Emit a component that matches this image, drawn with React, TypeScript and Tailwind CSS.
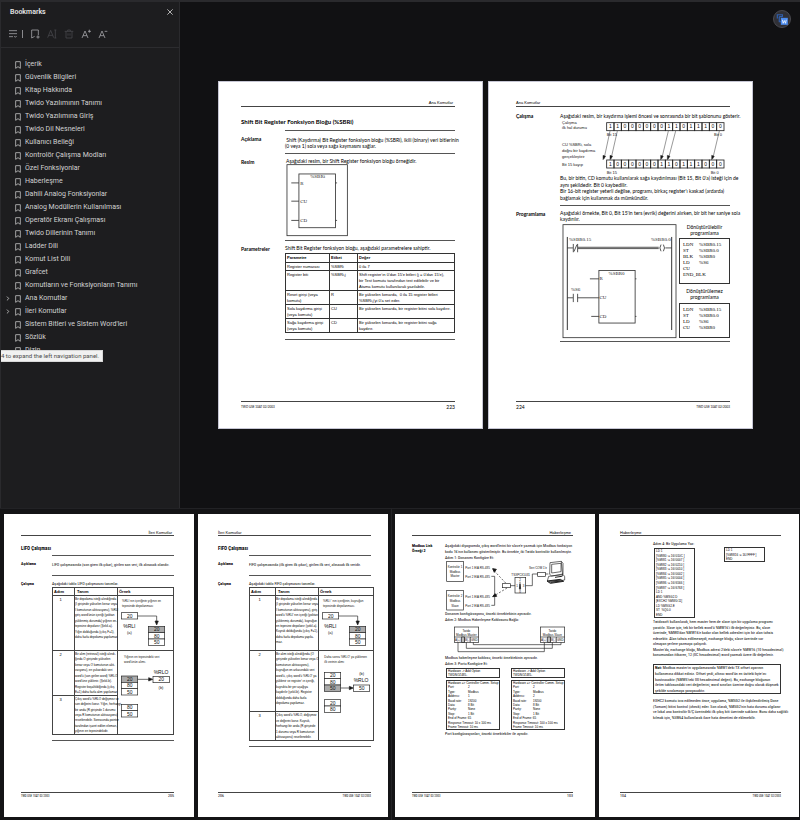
import { ReactNode } from "react";

const bookmarks = [
  "İçerik",
  "Güvenlik Bilgileri",
  "Kitap Hakkında",
  "Twido Yazılımının Tanımı",
  "Twido Yazılımına Giriş",
  "Twido Dil Nesneleri",
  "Kullanıcı Belleği",
  "Kontrolör Çalışma Modları",
  "Özel Fonksiyonlar",
  "Haberleşme",
  "Dahili Analog Fonksiyonlar",
  "Analog Modüllerin Kullanılması",
  "Operatör Ekranı Çalışması",
  "Twido Dillerinin Tanımı",
  "Ladder Dili",
  "Komut List Dili",
  "Grafcet",
  "Komutların ve Fonksiyonların Tanımı",
  "Ana Komutlar",
  "İleri Komutlar",
  "Sistem Bitleri ve Sistem Word'leri",
  "Sözlük",
  "Dizin",
];

const expandable = ["Ana Komutlar", "İleri Komutlar"];

const parameters = [
  { name: ["Register numarası"], label: "%SBRi", value: ["0 ila 7"] },
  {
    name: ["Register biti"],
    label: "%SBRi,j",
    value: [
      "Shift register'ın 0'dan 15'e bitleri (j = 0'dan 15'e),",
      "bir Test komutu tarafından test edilebilir ve bir",
      "Atama komutu kullanılarak yazılabilir.",
    ],
  },
  {
    name: ["Reset girişi (veya", "komutu)"],
    label: "R",
    value: ["Bir yükselen kenarda,  0 ila 15 register bitleri", "%SBRi,j'yi 0'a set eder."],
  },
  {
    name: ["Sola kaydırma girişi", "(veya komutu)"],
    label: "CU",
    value: ["Bir yükselen kenarda, bir register bitini sola kaydırır."],
  },
  {
    name: ["Sağa kaydırma girişi", "(veya komutu)"],
    label: "CD",
    value: ["Bir yükselen kenarda, bir register bitini sağa", "kaydırır."],
  },
];

/* ---------- sidebar ---------- */

function BookmarkIcon() {
  return (
    <svg viewBox="0 0 18 24" className="h-2 w-1.5 shrink-0" fill="none" stroke="#c4c4c4" strokeWidth="2.4">
      <path d="M2 2h14v20l-7-5-7 5z" />
    </svg>
  );
}

function ToolButton({ label, dim, children }: { label: string; dim?: boolean; children: ReactNode }) {
  return (
    <button type="button" aria-label={label} className={dim ? "text-[#48484d]" : "text-[#a4a4a8]"}>
      <svg viewBox="0 0 30 30" className="size-[10px]" fill="none" stroke="currentColor" strokeWidth="2.4">
        {children}
      </svg>
    </button>
  );
}

function Sidebar() {
  return (
    <aside className="relative w-[180px] shrink-0 overflow-hidden border-l border-r border-[#2a2a2d] bg-[#1d1d1f] font-['Roboto','Open_Sans',sans-serif] text-[#d2d2d2]">
      <div className="border-b border-[#2c2c2f] pb-2 pt-1">
        <div className="flex h-3 items-center justify-between pl-[9px] pr-[5px]">
          <h2 className="text-[7px] font-semibold leading-3 text-[#e4e4e4]">Bookmarks</h2>
          <button type="button" aria-label="Close" className="text-[#c8c8c8]">
            <svg viewBox="0 0 24 24" className="size-2" fill="none" stroke="currentColor" strokeWidth="2.6">
              <path d="M4 4l16 16M20 4L4 20" />
            </svg>
          </button>
        </div>
        <div className="mt-[11px] flex h-[10px] items-center gap-[7px] pl-[7px]">
          <div className="flex items-center gap-1">
            <ToolButton label="Options">
              <path d="M3 5h24M3 14h24M3 23h12M19 21l3 4 4-4" />
            </ToolButton>
            <span className="h-2 w-px bg-[#8a8a8e]" />
          </div>
          <ToolButton label="Add bookmark">
            <path d="M14 22l-9 5V3h20v15M19 24h10M24 19v10" />
          </ToolButton>
          <ToolButton label="Rename" dim>
            <path d="M2 26L11 4l9 22M5 19h12M22 3h6M25 3v24M22 27h6" />
          </ToolButton>
          <ToolButton label="Delete" dim>
            <path d="M2 7h26M6 7v20h18V7M11 7V3h8v4M12 13v7M18 13v7" />
          </ToolButton>
          <ToolButton label="Increase text size">
            <path d="M3 27L12 6l9 21M6 20h12M21 7h9M25 2v9" />
          </ToolButton>
          <ToolButton label="Decrease text size">
            <path d="M3 27L12 6l9 21M6 20h12M20 7h8" />
          </ToolButton>
        </div>
      </div>
      <ul className="pt-[10px]">
        {bookmarks.map((title) => (
          <li key={title} className="flex h-[13px] items-center pl-[5px]">
            <span className="w-[9px]">
              {expandable.includes(title) && (
                <svg viewBox="0 0 12 18" className="h-[5px] w-[4px]" fill="none" stroke="#c4c4c4" strokeWidth="3">
                  <path d="M2 2l7 7-7 7" />
                </svg>
              )}
            </span>
            <BookmarkIcon />
            <a href="#" className="ml-1 whitespace-nowrap text-[7px] leading-[13px]">
              {title}
            </a>
          </li>
        ))}
      </ul>
      <div className="absolute left-0 top-[348px] h-3 w-[102px] whitespace-nowrap border border-l-0 border-[#d8d8d8] bg-[#f1f1f1] text-[6px] leading-[10px] text-[#4c4c4c]">
        4 to expand the left navigation panel.
      </div>
    </aside>
  );
}

/* ---------- page parts ---------- */

function Lines({ lines, className = "" }: { lines: string[]; className?: string }) {
  return (
    <div className={`flex flex-col justify-between ${className}`}>
      {lines.map((line, inx) => (
        <span key={inx} className="whitespace-pre">
          {line}
        </span>
      ))}
    </div>
  );
}

function Section({ label, rule, className, children }: { label?: string; rule?: boolean; className: string; children?: ReactNode }) {
  return (
    <section className={`grid ${className}`}>
      <h3 className={`font-bold whitespace-pre ${rule ? "pt-1.5" : "pt-px"}`}>{label}</h3>
      <div className={rule ? "border-t border-[#555]" : "border-t border-transparent"}>{children}</div>
    </section>
  );
}

const sans = "font-['Liberation_Sans',Arial,sans-serif]";
const serif = "font-['Liberation_Serif',serif]";

function PageHeader({ text, right }: { text: string; right?: boolean }) {
  return <header className={`border-b border-[#444] text-[4px] ${sans} ${right ? "pr-0.5 text-right" : ""}`}>{text}</header>;
}

function PageFooter({ page, right, className }: { page: string; right?: boolean; className: string }) {
  return (
    <footer className={`mt-auto flex items-center justify-between border-t border-[#444] ${right ? "" : "flex-row-reverse"} ${className}`}>
      <span className="text-[3px]">TWD USE 10AT 02/2003</span>
      <span>{page}</span>
    </footer>
  );
}

/* ---------- page 223 ---------- */

function ShiftRegisterPage() {
  return (
    <article className="flex min-h-[348px] flex-col border border-[#c6c6d4] bg-white pb-4 pl-[22px] pr-[27px] pt-[18px] text-[5px] leading-[6px]">
      <PageHeader text="Ana Komutlar" right />
      <h2 className="mt-2.5 text-[6px] font-bold leading-[9px]">Shift Bit Register Fonksiyon Bloğu (%SBRi)</h2>
      <Section label="Açıklama" rule className="mt-1 h-[23px] grid-cols-[44px_minmax(0,1fr)]">
        <Lines
          className="pt-1.5"
          lines={[" Shift (Kaydırma) Bit Register fonksiyon bloğu (%SBRi), ikili (binary) veri bitlerinin", "(0 veya 1) sola veya sağa kaymasını sağlar."]}
        />
      </Section>
      <Section label="Resim" rule className="grid-cols-[44px_minmax(0,1fr)] pb-[3px]">
        <p className="pl-px pt-1">Aşağıdaki resim, bir Shift Register fonksiyon bloğu örneğidir.</p>
        <svg viewBox="204 252 188 220" className="ml-px h-[73px] w-[63px]" fill="none" stroke="#333" strokeWidth="2.5">
          <rect x="206" y="254" width="182" height="214" />
          <rect x="242" y="282" width="110" height="162" />
          <path d="M219 309h23M219 364h23M219 422h23M352 309h5M352 422h5" />
          <g className={serif} stroke="none" fill="#222" fontSize="15">
            <text x="276" y="295">%SBRi</text>
            <text x="246" y="314">R</text>
            <text x="246" y="369">CU</text>
            <text x="246" y="427">CD</text>
          </g>
        </svg>
      </Section>
      <Section label="Parametreler" rule className="grid-cols-[44px_minmax(0,1fr)]">
        <p className="pb-[2px] pt-1">Shift Bit Register fonksiyon bloğu, aşağıdaki parametrelere sahiptir.</p>
        <table className={`w-full table-fixed border-collapse text-left text-[4px] ${sans}`}>
          <thead>
            <tr className="h-[9px]">
              <th className="w-[44px] border border-[#333] p-0 pl-px">Parametre</th>
              <th className="w-[28px] border border-[#333] p-0 pl-px">Etiket</th>
              <th className="border border-[#333] p-0 pl-px">Değer</th>
            </tr>
          </thead>
          <tbody className="align-top">
            {parameters.map((row) => (
              <tr key={row.label}>
                <td className="whitespace-nowrap border border-[#333] pl-px pt-px">
                  <Lines lines={row.name} />
                </td>
                <td className="border border-[#333] pl-px pt-px">{row.label}</td>
                <td className="whitespace-nowrap border border-[#333] pl-px pt-px">
                  <Lines lines={row.value} />
                </td>
              </tr>
            ))}
          </tbody>
        </table>
        <hr className="mt-1.5 border-[#555]" />
      </Section>
      <PageFooter page="223" right className="leading-[10px]" />
    </article>
  );
}

/* ---------- page 224 ---------- */

function BitRow({ bits, y }: { bits: string; y: number }) {
  return (
    <g>
      {bits.split("").map((bit, inx) => (
        <g key={inx}>
          <rect x={356 + inx * 22} y={y} width="22" height="24" />
          <text x={367 + inx * 22} y={y + 17} textAnchor="middle" stroke="none" fill="#111" fontSize="15">
            {bit}
          </text>
        </g>
      ))}
    </g>
  );
}

function BitArrow({ x, dx }: { x: number; dx: number }) {
  return (
    <g stroke="#333" strokeWidth="1.5">
      <path d={`M${x} 156L${x - dx} 240`} />
      <path d={`M${x - dx - 3} 242l0 -13 8 3z`} fill="#111" />
    </g>
  );
}

function BitPattern() {
  return (
    <svg viewBox="216 120 516 168" className={`h-[56px] w-[172px] ${sans}`} fill="none" stroke="#222" strokeWidth="2.5">
      <BitRow bits="1100000011011100" y={131} />
      <BitRow bits="1000000110111000" y={243} />
      <BitArrow x={366} dx={18} />
      <BitArrow x={388} dx={19} />
      <BitArrow x={541} dx={20} />
      <BitArrow x={563} dx={22} />
      <BitArrow x={694} dx={20} />
      <g stroke="none" fill="#111" fontSize="12">
        <text x="222" y="135">Çalışma</text>
        <text x="222" y="151">ilk hal durumu</text>
        <text x="222" y="201">CU %SBRi, sola</text>
        <text x="222" y="219">doğru bir kaydırma</text>
        <text x="222" y="237">gerçekleştirir</text>
        <text x="222" y="262">Bit 15 kayıp</text>
        <text x="356" y="172">Bit 15</text>
        <text x="678" y="172">Bit 0</text>
        <text x="356" y="284">Bit 15</text>
        <text x="668" y="284">Bit 0</text>
      </g>
    </svg>
  );
}

function Ladder() {
  return (
    <svg viewBox="224 70 344 346" className="h-[115px] w-[115px] shrink-0" fill="none" stroke="#333" strokeWidth="2.5">
      <rect x="226" y="72" width="340" height="340" />
      <path d="M239 109v280M553 109v280" strokeWidth="3" />
      <path d="M239 142h17M257 130v25M270 130v25M259 153l9 -21M271 140h243M271 144h243M534 142h19" />
      <path d="M521 132q-7 10 0 20M528 132q7 10 0 20" />
      <rect x="334" y="210" width="109" height="158" />
      <path d="M307 235h27M239 292h17M257 280v25M270 280v25M270 292h64M311 348h23M443 235h4M443 348h4" />
      <g className={serif} stroke="none" fill="#222" fontSize="15">
        <text x="244" y="122">%SBR0.15</text>
        <text x="550" y="122" textAnchor="end">%SBR0.0</text>
        <text x="363" y="222">%SBR0</text>
        <text x="336" y="240">R</text>
        <text x="250" y="273">%S6</text>
        <text x="336" y="297">CU</text>
        <text x="336" y="353">CD</text>
      </g>
    </svg>
  );
}

function Listing({ rows, className }: { rows: string[][]; className: string }) {
  return (
    <div className={`grid grid-cols-[16px_1fr] content-start border border-[#333] pl-[3px] pt-[3px] ${serif} ${className}`}>
      {rows.map(([op, arg]) => (
        <div key={op} className="contents">
          <span className="whitespace-nowrap">{op}</span>
          <span>{arg}</span>
        </div>
      ))}
    </div>
  );
}

function OperationPage() {
  return (
    <article className="flex min-h-[348px] flex-col border border-[#c6c6d4] bg-white pb-4 pl-[27px] pr-[22px] pt-[18px] text-[5px] leading-[6px]">
      <PageHeader text="Ana Komutlar" />
      <Section label="Çalışma" className="mt-[5px] grid-cols-[44px_minmax(0,1fr)]">
        <p className="whitespace-nowrap">Aşağıdaki resim, bir kaydırma işlemi öncesi ve sonrasında bir bit şablonunu gösterir.</p>
        <BitPattern />
        <Lines
          className="h-[26px]"
          lines={[
            "Bu, bir bitin, CD komutu kullanılarak sağa kaydırılması (Bit 15, Bit 0'a) isteği için de",
            "aynı şekildedir. Bit 0 kaybedilir.",
            "Bir 16-bit register yeterli değilse, programı, birkaç register'ı kaskad (ardarda)",
            "bağlamak için kullanmak da mümkündür.",
          ]}
        />
      </Section>
      <Section label="Programlama" rule className="mt-1 grid-cols-[44px_minmax(0,1fr)]">
        <Lines
          className="h-[18px] pt-1 pb-0.5"
          lines={["Aşağıdaki örnekte, Bit 0, Bit 15'in ters (evrik) değerini alırken, bir bit her saniye sola", "kaydırılır."]}
        />
        <div className="flex gap-0.5 pl-0.5">
          <Ladder />
          <div className="flex flex-1 flex-col pb-px">
            <p className="text-center">Dönüştürülebilir programlama</p>
            <Listing
              className="mt-0.5 h-[46px]"
              rows={[["LDN", "%SBR0.15"], ["ST", "%SBR0.0"], ["BLK", "%SBR0"], ["LD", "%S6"], ["CU", ""], ["END_BLK", ""]]}
            />
            <p className="mt-1 text-center">Dönüştürülemez programlama</p>
            <Listing className="mt-auto h-[35px]" rows={[["LDN", "%SBR0.15"], ["ST", "%SBR0.0"], ["LD", "%S6"], ["CU", "%SBR0"]]} />
          </div>
        </div>
        <hr className="mt-[2px] border-[#555]" />
      </Section>
      <PageFooter page="224" className="leading-[10px]" />
    </article>
  );
}

/* ---------- pages 205 and 206 ---------- */

function Stack({ x, y, values, shaded }: { x: number; y: number; values: number[]; shaded?: number }) {
  return (
    <g>
      {values.map((value, inx) => (
        <g key={inx}>
          <rect x={x} y={y + inx * 19} width="49" height="19" fill={inx === shaded ? "#aaa" : "#fff"} />
          <text x={x + 25} y={y + inx * 19 + 15} textAnchor="middle" stroke="none" fill="#111" fontSize="15">
            {value}
          </text>
        </g>
      ))}
    </g>
  );
}

function PushFigure({ caption }: { caption: string[] }) {
  return (
    <svg viewBox="353 285 165 162" className={`h-[54px] w-[55px] ${sans}`} fill="none" stroke="#222" strokeWidth="2">
      <Stack x={363} y={335} values={[20]} />
      <path d="M412 345h57v16" />
      <path d="M464 360h10l-5 12z" fill="#111" />
      <Stack x={444} y={376} values={[20, 80, 50]} shaded={0} />
      <g stroke="none" fill="#111" fontSize="9">
        <text x="365" y="304">{caption[0]}</text>
        <text x="365" y="319">{caption[1]}</text>
        <text x="387" y="399" textAnchor="middle" fontSize="12">(a)</text>
        <text x="387" y="380" textAnchor="middle" fontSize="15">%RLI</text>
      </g>
    </svg>
  );
}

function LifoPopFigure() {
  return (
    <svg viewBox="353 451 165 249" className={`h-[83px] w-[55px] ${sans}`} fill="none" stroke="#222" strokeWidth="2">
      <Stack x={363} y={526} values={[20, 80, 50]} shaded={0} />
      <path d="M412 536h34" />
      <path d="M445 531v10l12-5z" fill="#111" />
      <Stack x={458} y={527} values={[20]} />
      <Stack x={363} y={611} values={[80, 50]} />
      <g stroke="none" fill="#111" fontSize="9">
        <text x="371" y="471">Yığının en tepesindeki veri</text>
        <text x="371" y="486">word'ünün alımı.</text>
        <text x="482" y="565" textAnchor="middle" fontSize="12">(b)</text>
        <text x="482" y="520" textAnchor="middle" fontSize="15">%RLO</text>
      </g>
    </svg>
  );
}

function FifoPopFigure() {
  return (
    <svg viewBox="372 451 165 264" className={`h-[88px] w-[55px] ${sans}`} fill="none" stroke="#222" strokeWidth="2">
      <Stack x={388} y={515} values={[20, 80, 50]} shaded={2} />
      <path d="M437 562h28" />
      <path d="M463 557v10l12-5z" fill="#111" />
      <Stack x={475} y={553} values={[50]} />
      <Stack x={388} y={597} values={[20, 80]} />
      <g stroke="none" fill="#111" fontSize="9">
        <text x="388" y="471">Daha  sonra  %RLO'  ya  yüklenen</text>
        <text x="388" y="486">ilk verinin alımı</text>
        <text x="500" y="524" textAnchor="middle" fontSize="12">(b)</text>
        <text x="498" y="544" textAnchor="middle" fontSize="15">%RLO</text>
      </g>
    </svg>
  );
}

const cell = "border border-[#444] p-0";

type Step = { lines: string[]; row: string; text: string };

type StackTableProps = { steps: Step[]; push: ReactNode; pop: ReactNode; width: string; stepCol: string };

function StackTable({ steps, push, pop, width, stepCol }: StackTableProps) {
  return (
    <table className={`table-fixed border-collapse text-left ${sans} ${width}`}>
      <thead>
        <tr className="h-2">
          <th className={`${cell} ${stepCol} pl-px`}>Adım</th>
          <th className={`${cell} w-[43px] pl-0.5`}>Tanım</th>
          <th className={`${cell} pl-px`}>Örnek</th>
        </tr>
      </thead>
      <tbody className="align-top">
        {steps.map((step, inx) => (
          <tr key={inx} className={step.row}>
            <td className={`${cell} pr-1.5 pt-px text-center`}>{inx + 1}</td>
            <td className={`${cell} pt-px text-[3px]`}>
              <Lines lines={step.lines} className={step.text} />
            </td>
            {inx === 0 && <td className={cell}>{push}</td>}
            {inx === 1 && (
              <td className={cell} rowSpan={2}>
                {pop}
              </td>
            )}
          </tr>
        ))}
      </tbody>
    </table>
  );
}

const lifoSteps: Step[] = [
  {
    row: "h-[55px]",
    text: "h-[43px]",
    lines: [
      "Bir depolama isteği alındığında",
      "(I girişinde yükselen kenar veya",
      "I komutunun aktivasyonu), %RLI",
      "giriş word'ünün içeriği (yoktan",
      "yüklenmiş durumda) yığının en-",
      "tepesine depolanır (Şekil-a).",
      "Yığın dolduğunda (çıkış F=1),",
      "daha fazla depolama yapılamaz",
    ],
  },
  {
    row: "h-[45px]",
    text: "h-[43px]",
    lines: [
      "Bir alım (retrieval) isteği alındı-",
      "ğında O girişinde yükselen",
      "kenar veya O komutunun akti-",
      "vasyonu), en yukarıdaki veri",
      "word'ü (son girilen word) %RLO",
      "word'üne yüklenir. (Şekil-b).",
      "Register boşaltıldığında (çıkış",
      "E=1) daha fazla alım yapılamaz",
    ],
  },
  {
    row: "h-[39px]",
    text: "h-[37px]",
    lines: [
      "Çıkış word'ü %RLO değişmez ve",
      "son değerini korur. Yığın, herhangi",
      "bir anda (R girişinde 1 durumu",
      "veya R komutunun aktivasyonu)",
      "resetlenebilir. Sonrasında pointer",
      "tarafından işaret edilen eleman,",
      "yığının en tepesindekidir.",
    ],
  },
];

const fifoSteps: Step[] = [
  {
    row: "h-[55px]",
    text: "h-[48px]",
    lines: [
      "Bir depolama isteği alındığında",
      "(I girişinde yükselen kenar veya",
      "I komutunun aktivasyonu), giriş",
      "word'ü %RLI' nın içeriği (yoktan",
      "yüklenmiş durumda), kuyruğun",
      "en tepesine depolanır (şekil-a).",
      "Kuyruk dolduğunda (çıkış F=1),",
      "daha fazla depolama yapıla-",
      "maz.",
    ],
  },
  {
    row: "h-[61px]",
    text: "h-[54px]",
    lines: [
      "Bir alım isteği alındığında (O",
      "girişinde yükselen kenar veya O",
      "komutunun aktivasyonu),",
      "kuyruğun en arkasındaki veri",
      "word'ü, çıkış word'ü %RLO' ya",
      "yüklenir ve register' ın içeriği,",
      "kuyrukta bir yer aşağıya",
      "kaydırılır (şekil-b). Register",
      "dolduğunda daha fazla",
      "depolama yapılamaz.",
    ],
  },
  {
    row: "h-[29px]",
    text: "h-[27px]",
    lines: [
      "Çıkış word'ü %RLO, değişmez",
      "ve değerini korur. Kuyruk,",
      "herhangi bir anda (R girişinde",
      "1 durumu veya R komutunun",
      "aktivasyonu) resetlenebilir.",
    ],
  },
];

function LifoPage() {
  return (
    <article className="flex min-h-[303px] flex-col bg-white pb-[18px] pl-[17px] pr-5 pt-4">
      <PageHeader text="İleri Komutlar" right />
      <h2 className="mt-2 text-[5px] font-bold leading-[8px]">LIFO Çalışması</h2>
      <Section label="Açıklama" rule className="mt-[3px] h-5 grid-cols-[31px_minmax(0,1fr)]">
        <p className="whitespace-nowrap pt-1.5">LIFO çalışmasında (son giren ilk çıkar), girilen son veri, ilk alınacak olandır.</p>
      </Section>
      <Section label="Çalışma" rule className="grid-cols-[31px_minmax(0,1fr)]">
        <p className="pb-px pt-[5px]">Aşağıdaki tablo LIFO çalışmasını tanımlar.</p>
        <StackTable
          steps={lifoSteps}
          width="w-full"
          stepCol="w-[22px]"
          push={<PushFigure caption={["%RLI nın içeriğinin yığının en", "tepesinde depolanması"]} />}
          pop={<LifoPopFigure />}
        />
        <hr className="mt-[5px] border-[#555]" />
      </Section>
      <PageFooter page="205" right className="leading-[6px]" />
    </article>
  );
}

function FifoPage() {
  return (
    <article className="flex min-h-[303px] flex-col bg-white pb-[18px] pl-5 pr-[17px] pt-4">
      <PageHeader text="İleri Komutlar" />
      <h2 className="mt-2 text-[5px] font-bold leading-[8px]">FIFO Çalışması</h2>
      <Section label="Açıklama" rule className="mt-[3px] h-5 grid-cols-[31px_minmax(0,1fr)]">
        <p className="whitespace-nowrap pt-1.5">FIFO çalışmasında (ilk giren ilk çıkar), girilen ilk veri, alınacak ilk veridir.</p>
      </Section>
      <Section label="Çalışma" rule className="grid-cols-[31px_minmax(0,1fr)]">
        <p className="pb-px pt-[5px]">Aşağıdaki tablo FIFO çalışmasını tanımlar.</p>
        <StackTable
          steps={fifoSteps}
          width="w-[125px]"
          stepCol="w-[26px]"
          push={<PushFigure caption={["%RLI ' nın içeriğinin, kuyruğun", "tepesinde depolanması."]} />}
          pop={<FifoPopFigure />}
        />
        <hr className="mt-[5px] border-[#555]" />
      </Section>
      <PageFooter page="206" className="leading-[6px]" />
    </article>
  );
}

/* ---------- page 103 ---------- */

function WiringDiagram() {
  return (
    <svg viewBox="159 180 390 153" className={`h-[51px] w-[130px] ${sans}`} fill="none" stroke="#222" strokeWidth="2">
      <rect x="164" y="184" width="50" height="60" />
      <rect x="164" y="271" width="50" height="59" />
      <path d="M298 229h10v87h-10" />
      <path d="M341 249l-33 -35M345 264l-36 22" strokeDasharray="6 5" />
      <path d="M302 206l11 2-6 9zM302 290l7-9 5 8z" fill="#111" strokeWidth="3" />
      <rect x="331" y="251" width="24" height="12" />
      <path d="M355 257h14M401 257h20v-35h16M460 222h9" />
      <rect x="369" y="232" width="32" height="47" />
      <path d="M384 245v26M384 252l-2 14h4z" fill="#111" />
      <rect x="437" y="217" width="23" height="12" />
      {/* computer */}
      <path d="M474 188l34-4 5 6v32l-34 6-6-5zM479 193l28-3v25l-28 4z" />
      <path d="M508 184l4 44-8 2" />
      <path d="M470 229l44-5 4 6v10l-44 7-8-4z" />
      <path d="M465 243l40-5 10 6-40 6zM470 244l36-4M476 247l34-4M489 232l20-3" strokeWidth="3" />
      <g stroke="none" fill="#111" fontSize="9">
        <g textAnchor="middle">
          <text x="189" y="203">Kontrolör 1</text>
          <text x="189" y="218">Modbus</text>
          <text x="189" y="231">Master</text>
          <text x="189" y="292">Kontrolör 2</text>
          <text x="189" y="307">Modbus</text>
          <text x="189" y="320">Slave</text>
          <text x="386" y="228">TSXPCX1031</text>
          <text x="384" y="242">2</text>
          <text x="375" y="260">1</text>
          <text x="395" y="260">3</text>
          <text x="384" y="278">0</text>
        </g>
        <text x="220" y="206">Port 1 EIA RS-485</text>
        <text x="220" y="233">Port 2 EIA RS-485</text>
        <text x="220" y="294">Port 1 EIA RS-485</text>
        <text x="220" y="320">Port 2 EIA RS-485</text>
        <text x="411" y="206">Seri COM 1'e</text>
      </g>
    </svg>
  );
}

function Terminal({ x, name }: { x: number; name: string }) {
  return (
    <g>
      <rect x={x} y="381" width="73" height="46" />
      <path d={`M${x} 411h73M${x + 30} 411v16M${x + 48} 411v16`} />
      <rect x={x + 22} y="411" width="8" height="16" fill="#bbb" />
      <g stroke="none" fill="#111" fontSize="9">
        <text x={x + 36} y="395" textAnchor="middle">Twido</text>
        <text x={x + 36} y="407" textAnchor="middle">{name}</text>
        <text x={x + 2} y="422">A(+)</text>
        <text x={x + 32} y="422">B(-)</text>
        <text x={x + 50} y="422">GND</text>
      </g>
    </g>
  );
}

function CableDiagram() {
  return (
    <svg viewBox="159 378 390 84" className={`h-[28px] w-[130px] ${sans}`} fill="none" stroke="#222" strokeWidth="2">
      <Terminal x={187} name="Modbus Master" />
      <Terminal x={445} name="Modbus Slave" />
      <path d="M198 427v28h259v-28M223 427v18h258v-18M244 427v7h263v-7" />
    </svg>
  );
}

function PortConfig({ address, timeout }: { address: number; timeout: number }) {
  const rows = [
    ["Port:", "2"],
    ["Type:", "Modbus"],
    ["Address:", `${address}`],
    ["Baud rate:", "19200"],
    ["Data:", "8 Bit"],
    ["Parity:", "None"],
    ["Stop:", "1 Bit"],
  ];
  return (
    <div className={`w-[54px] whitespace-nowrap text-[3px] leading-[4px] ${sans}`}>
      <Lines className="h-[10px] border border-[#333] pl-px" lines={["Hardware -> Add Option", "TWDNOZ485-"]} />
      <div className="mt-0.5 flex h-[50px] flex-col justify-between border border-[#333] pl-px">
        <span>Hardware =&gt; Controller Comm. Setup</span>
        {rows.map(([key, value]) => (
          <div key={key} className="grid grid-cols-[20px_1fr]">
            <span>{key}</span>
            <span>{value}</span>
          </div>
        ))}
        <span>End of Frame: 65</span>
        <span>Response Timeout: {timeout} x 100 ms</span>
        <span>Frame Timeout: 10 ms</span>
      </div>
    </div>
  );
}

function ModbusPage() {
  return (
    <article className="flex min-h-[303px] flex-col bg-white pb-[18px] pl-[17px] pr-[22px] pt-4">
      <PageHeader text="Haberleşme" right />
      <Section label={"Modbus Link\nÖrneği 2"} className="mt-1.5 grid-cols-[33px_minmax(0,1fr)]">
        <Lines
          className="h-[17px]"
          lines={[
            "Aşağıdaki diyagramda, çıkış word'lerini bir slave'e yazmak için Modbus fonksiyon",
            "kodu 16'nın kullanımı gösterilmiştir. Bu örnekte, iki Twido kontrolör kullanılmıştır.",
            "Adım 1: Donanımı Konfigüre Et:",
          ]}
        />
        <WiringDiagram />
        <Lines className="h-[11px]" lines={["Donanım konfigürasyonu, önceki örnektekinin aynısıdır.", "Adım 2: Modbus Haberleşme Kablosunu Bağla:"]} />
        <div className="mt-1">
          <CableDiagram />
        </div>
        <Lines className="mt-px h-[11px]" lines={["Modbus haberleşme kablosu, önceki örnektekinin aynısıdır.", "Adım 3: Portu Konfigüre Et:"]} />
        <div className="mt-0.5 flex gap-[11px] pl-px">
          <PortConfig address={1} timeout={10} />
          <PortConfig address={2} timeout={100} />
        </div>
        <p className="mt-px">Port konfigürasyonları, önceki örnektekiler ile aynıdır.</p>
      </Section>
      <PageFooter page="103" right className="leading-[6px]" />
    </article>
  );
}

/* ---------- page 104 ---------- */

function ApplicationPage() {
  return (
    <article className="flex min-h-[303px] flex-col bg-white pb-[18px] pl-[21px] pr-[18px] pt-4">
      <PageHeader text="Haberleşme" />
      <Section className="mt-1 grid-cols-[33px_minmax(0,1fr)]">
        <p>Adım 4: Bir Uygulama Yaz:</p>
        <div className={`flex items-start gap-[29px] pl-px text-[3px] leading-[4px] ${sans}`}>
          <Lines
            className="mt-0.5 h-[70px] w-[41px] border border-[#333] pl-px"
            lines={[
              "LD 1",
              "[%MW0 := 16#010C ]",
              "[%MW1 := 16#0007 ]",
              "[%MW2 := 16#0210 ]",
              "[%MW3 := 16#0010 ]",
              "[%MW4 := 16#0002 ]",
              "[%MW5 := 16#0004 ]",
              "[%MW6 := 16#6566 ]",
              "[%MW7 := 16#6768 ]",
              "LD 1",
              "AND %MSG2.D",
              "[EXCH2 %MW0:11]",
              "LD %MSG2.E",
              "ST  %Q0.0",
              "END",
            ]}
          />
          <Lines className="mt-px h-[15px] w-[41px] border border-[#333] pl-px" lines={["LD 1", "[%MW16 := 16#FFFF ]", "END"]} />
        </div>
        <Lines
          className="mt-px h-[38px]"
          lines={[
            "Twidosoft kullanılarak, hem master hem de slave için bir uygulama programı",
            "yaratılır. Slave için, tek bir bellek word'ü %MW16'i ilk-değerleyiniz. Bu, slave",
            "üzerinde, %MW0'dan %MW16'e kadar olan bellek adresleri için bir alan tahsis",
            "edecektir. Alan tahsis edilmeseydi, exchange bloğu, slave üzerinde var",
            "olmayan yerlere yazmaya çalışırdı.",
            "Master'da, exchange bloğu, Modbus adresi 2'deki slave'e %MW16 (10 hexadecimal)",
            "konumundan itibaren, 12 (0C hexadecimal) word yazmak üzere ilk-değerlenir.",
          ]}
        />
        <div className="mt-[7px] flex h-[30px] flex-col justify-between whitespace-nowrap border border-[#333] pl-px">
          <span>
            <b>Not:</b> Modbus master'ın uygulamasında %MW1'deki TX offset ayarının
          </span>
          <span>kullanımına dikkat ediniz. Offset yedi, altıncı word'ün en üstteki byte'ını</span>
          <span>bastıracaktır (%MW5'teki 00 hexadecimal değeri). Bu, exchange bloğunun</span>
          <span>iletim tablosundaki veri değerlerini, word sınırları üzerine doğru olarak düşecek</span>
          <span>şekilde sıralamaya yarayacaktır.</span>
        </div>
        <Lines
          className="mt-1 h-[22px]"
          lines={[
            "EXHC2 komutu icra edilmeden önce, uygulama, %MSG2 ile ilişkilendirilmiş Done",
            "(Tamam) bitini kontrol (check) eder. Son olarak, %MSG2'nin hata durumu algılanır",
            "ve lokal ana kontrolör G/Ç üzerindeki ilk çıkış biti üzerinde saklanır. Bunu daha sağlıklı",
            "kılmak için, %SW64 kullanılarak ilave hata denetimi de eklenebilir.",
          ]}
        />
      </Section>
      <PageFooter page="104" className="leading-[6px]" />
    </article>
  );
}

function App() {
  return (
    <div className="min-h-screen bg-[#141416] font-['Lato','Liberation_Sans',sans-serif] text-black">
      <div className="flex min-h-[508px] border-t-2 border-[#2a2a2d] bg-[#111113]">
        <Sidebar />
        <main className="relative grid flex-1 grid-cols-2 items-start gap-[5px] pl-[38px] pr-[47px] pt-[79px]">
          <ShiftRegisterPage />
          <OperationPage />
          <button
            type="button"
            aria-label="Convert to Word"
            className="absolute right-[9px] top-2 flex size-[18px] items-center justify-center rounded-full border border-[#4a4a50] bg-[#303036]"
          >
            <svg viewBox="0 0 36 36" className="size-3.5" fill="none">
              <path d="M6 17V7h13v6M11 12h8M11 12v13h5" stroke="#2f5fb0" strokeWidth="3" />
              <rect x="15" y="15" width="18" height="18" fill="#4d8df0" />
              <path d="M19 20l2 9 3-7 3 7 2-9" stroke="#fff" strokeWidth="2" />
            </svg>
          </button>
        </main>
      </div>
      <div className="grid grid-cols-[49fr_51fr] border-t border-[#222225] font-['Roboto_Condensed','Liberation_Sans_Narrow','Lato',sans-serif] text-[4px] leading-[5px]">
        <div className="grid grid-cols-2 items-start gap-1 border-r border-[#222225] pb-1 pl-1 pr-[3px] pt-[5px]">
          <LifoPage />
          <FifoPage />
        </div>
        <div className="grid grid-cols-2 items-start gap-1 pb-1 pl-[3px] pr-px pt-[5px]">
          <ModbusPage />
          <ApplicationPage />
        </div>
      </div>
    </div>
  );
}

export default App;
